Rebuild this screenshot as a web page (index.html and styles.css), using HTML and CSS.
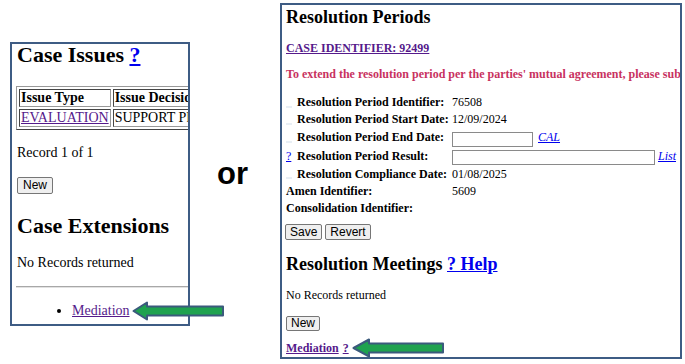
FILE: index.html
```html
<!DOCTYPE html>
<html>
<head>
	<meta charset="utf-8">
	<title>Case Issues or Resolution Periods</title>
	<link rel="stylesheet" href="styles.css">
</head>
<body>
	<div class="compare">
		<div class="panel left">
			<h2 class="title">Case Issues <a href="#" class="link">?</a></h2>
			<div class="clip">
				<table class="issues">
					<tr><th>Issue Type</th><th>Issue Decision</th></tr>
					<tr><td><a href="#" class="visited">EVALUATION</a></td><td>SUPPORT PROVIDED</td></tr>
				</table>
			</div>
			<p class="record">Record 1 of 1</p>
			<button type="button" class="btn">New</button>
			<h2 class="title ext">Case Extensions</h2>
			<p class="none">No Records returned</p>
			<hr class="rule">
			<ul class="links">
				<li><a href="#" class="visited">Mediation</a><svg class="arrow" width="93" height="20" viewBox="0 0 93 20"><path d="M1.5 10 L15 1.5 L15 5.5 L91 5.5 L91 14.5 L15 14.5 L15 18.5 Z" fill="#1fa24f" stroke="#3b5a7c" stroke-width="2" stroke-linejoin="round"/></svg></li>
			</ul>
		</div>

		<div class="or">or</div>

		<div class="panel right">
			<h3 class="head">Resolution Periods</h3>
			<a href="#" class="caseid">CASE IDENTIFIER: 92499</a>
			<div class="notice">To extend the resolution period per the parties' mutual agreement, please submit the request to the hearing office.</div>

			<div class="fields">
				<div class="row"><span class="mark dash"></span><span class="label">Resolution Period Identifier:</span><span class="value">76508</span></div>
				<div class="row"><span class="mark dash"></span><span class="label">Resolution Period Start Date:</span><span class="value">12/09/2024</span></div>
				<div class="row tall"><span class="mark dash"></span><span class="label">Resolution Period End Date:</span><span class="value"><input type="text" class="date"> <a href="#" class="small">CAL</a></span></div>
				<div class="row mid"><span class="mark"><a href="#" class="link">?</a></span><span class="label">Resolution Period Result:</span><span class="value"><input type="text" class="result"><a href="#" class="small">List</a></span></div>
				<div class="row mid"><span class="mark dash"></span><span class="label">Resolution Compliance Date:</span><span class="value">01/08/2025</span></div>
				<div class="row"><span class="label wide">Amen Identifier:</span><span class="value">5609</span></div>
				<div class="row"><span class="label wide">Consolidation Identifier:</span><span class="value"></span></div>
			</div>

			<div class="actions">
				<button type="button" class="btn sm">Save</button>
				<button type="button" class="btn sm">Revert</button>
			</div>

			<h3 class="head meet">Resolution Meetings <a href="#" class="link">? Help</a></h3>
			<p class="none sm">No Records returned</p>
			<button type="button" class="btn sm">New</button>
			<div class="med"><a href="#" class="visited">Mediation</a> <a href="#" class="visited q">?</a><svg class="arrow r" width="93" height="20" viewBox="0 0 93 20"><path d="M1.5 10 L17 1.5 L17 5.5 L91 5.5 L91 14.5 L17 14.5 L17 18.5 Z" fill="#1fa24f" stroke="#3b5a7c" stroke-width="2" stroke-linejoin="round"/></svg></div>
		</div>
	</div>
</body>
</html>
```

FILE: styles.css
```css
body {
	margin: 0;
	font-family: "Liberation Serif", "Times New Roman", serif;
	color: #000000;
	background: #ffffff;
}

.compare {
	display: flex;
	align-items: flex-start;
}

.panel {
	box-sizing: border-box;
	border: 2px solid #3e5c84;
	background: #ffffff;
}

/* left window */
.left {
	width: 180px;
	height: 284px;
	margin: 42px 0 0 10px;
	padding: 0 0 0 5px;
	font-size: 14px;
}

.title {
	margin: 0;
	font-size: 22px;
	line-height: 22px;
	font-weight: bold;
}

.link {
	color: #0000ee;
}

.visited {
	color: #551a8b;
}

.clip {
	margin-top: 20px;
	margin-left: -1px;
	overflow: hidden;
}

.issues {
	border: 1px outset #999;
	border-spacing: 2px;
	white-space: nowrap;
	font-size: 14px;
	line-height: 16px;
}

.issues th, .issues td {
	border: 1px inset #999;
	padding: 0 1px;
	text-align: left;
}

.record {
	margin: 15px 0 0;
	line-height: 16px;
}

.btn {
	margin: 16px 0 0;
	height: 17px;
	padding: 0 5px;
	font-family: "Liberation Sans", Arial, sans-serif;
	font-size: 12px;
	line-height: 13px;
	color: #000;
	background: #efefef;
	border: 1px solid #767676;
	border-radius: 2px;
}

.ext {
	margin-top: 21px;
}

.none {
	margin: 18px 0 0;
	line-height: 16px;
}

.rule {
	margin: 15px 0 0 -1px;
	border: none;
	border-top: 1px solid #a8a8a8;
	border-bottom: 1px solid #e2e2e2;
}

.links {
	margin: 15px 0 0;
	padding-left: 55px;
	line-height: 16px;
	white-space: nowrap;
}

.arrow {
	vertical-align: middle;
	margin-left: 2px;
	margin-top: -2px;
}

/* or */
.or {
	margin: 156px 0 0 27px;
	width: 63px;
	font-family: "Liberation Sans", Arial, sans-serif;
	font-size: 31px;
	line-height: 36px;
	font-weight: bold;
}

/* right window */
.right {
	width: 402px;
	height: 356px;
	margin-top: 3px;
	padding: 2px 0 0 4px;
	overflow: hidden;
	font-size: 12px;
}

.head {
	margin: 0;
	font-size: 18px;
	line-height: 20px;
	font-weight: bold;
}

.caseid {
	display: block;
	margin-top: 14px;
	color: #551a8b;
	font-weight: bold;
	line-height: 14px;
}

.notice {
	margin-top: 12px;
	color: #c8325f;
	font-weight: bold;
	line-height: 14px;
	white-space: nowrap;
}

.fields {
	margin-top: 13px;
}

.row {
	display: flex;
	align-items: center;
	height: 17px;
	line-height: 17px;
}

.row.tall {
	height: 19px;
}

.row.mid {
	height: 18px;
}

.mark {
	width: 11px;
	flex: none;
}

.mark.dash {
	height: 2px;
	margin-top: 8px;
	background: linear-gradient(to right, #e9eff5 6px, transparent 6px);
}

.label {
	width: 155px;
	flex: none;
	font-weight: bold;
	white-space: nowrap;
}

.label.wide {
	width: 166px;
}

.value {
	display: flex;
	align-items: center;
	white-space: nowrap;
}

.date, .result {
	box-sizing: border-box;
	height: 15px;
	margin: 4px 0 0;
	padding: 0 2px;
	border: 1px solid #8a8a8a;
	font-size: 11px;
}

.date {
	width: 81px;
	margin-right: 5px;
}

.result {
	width: 203px;
	margin-top: 2px;
	margin-right: 3px;
}

.small {
	color: #0000ee;
	font-style: italic;
}

.actions {
	display: flex;
	gap: 3px;
	margin-top: 7px;
	margin-left: -1px;
}

.btn.sm {
	margin: 0;
	height: 16px;
	padding: 0 4px;
}

.meet {
	margin-top: 14px;
}

.none.sm {
	margin: 14px 0 0;
	line-height: 14px;
}

.right > .btn.sm {
	margin-top: 14px;
	height: 15px;
}

.med {
	margin-top: 9px;
	font-weight: bold;
	line-height: 14px;
	white-space: nowrap;
}

.med .q {
	margin-left: 1px;
}

.arrow.r {
	margin-left: 3px;
}
```
